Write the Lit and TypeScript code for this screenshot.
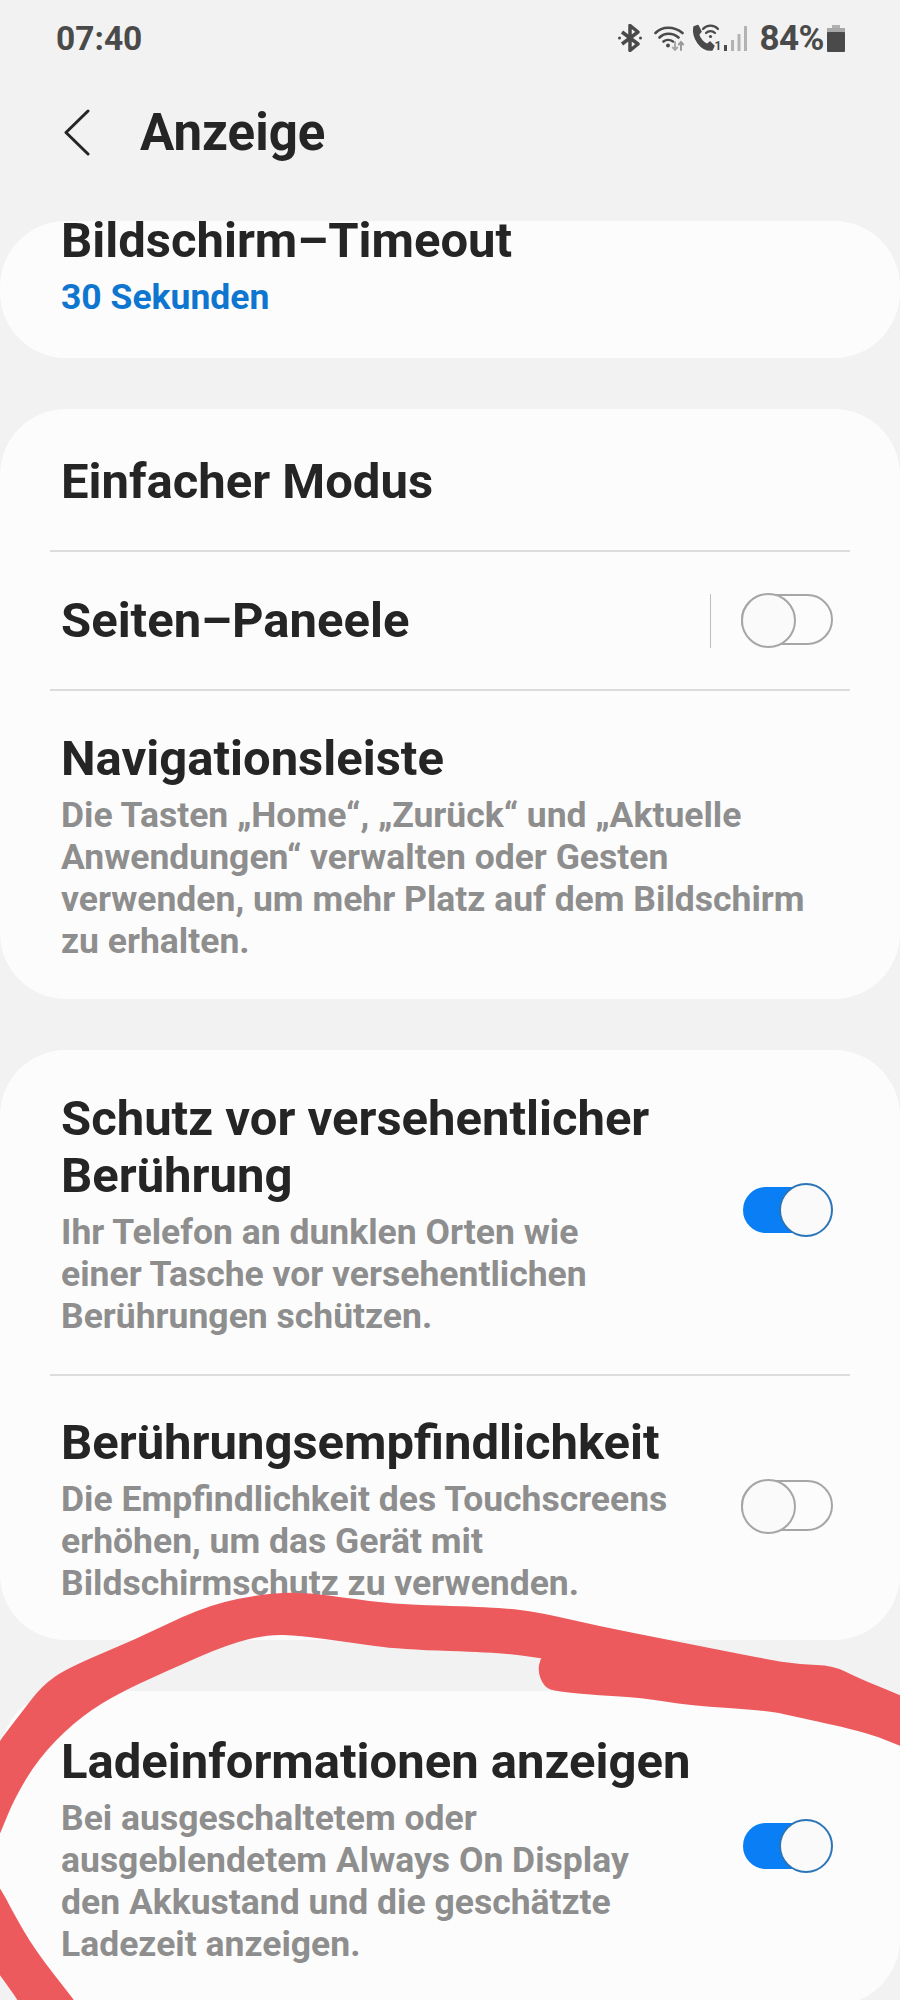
import { LitElement, html, css, svg } from "lit";
import { customElement } from "lit/decorators.js";

type Pt = [number, number];

const MAIN: Pt[] = [
  [-30, 1785], [0, 1743], [23, 1713], [43, 1687], [67, 1670], [133, 1642], [200, 1610], [250, 1597], [300, 1593],
  [357, 1601], [400, 1606], [500, 1609], [540, 1614], [600, 1628], [667, 1641], [767, 1661], [800, 1666],
  [833, 1667], [857, 1679], [900, 1697], [945, 1715], [945, 1762], [900, 1744], [867, 1731], [800, 1716], [767, 1709], [690, 1704],
  [640, 1696], [600, 1694], [557, 1690], [545, 1686], [539, 1670], [543, 1657], [543, 1657], [500, 1651], [400, 1648],
  [350, 1641], [300, 1634], [267, 1633], [227, 1643], [167, 1669], [110, 1696], [73, 1721], [37, 1758],
  [13, 1798], [0, 1830], [-30, 1900],
];
const LOWER: Pt[] = [[-30, 1845], [0, 1890], [10, 1910], [33, 1950], [72, 2000], [95, 2030], [35, 2030], [20, 2000], [0, 1973], [-30, 1930]];

/** Straight segments rounded off through their midpoints; the ends lie outside the canvas. */
const smooth = (pts: Pt[]) => {
  let d = `M${pts[0][0]} ${pts[0][1]}`;
  for (let i = 1; i < pts.length - 1; i++) {
    const mx = (pts[i][0] + pts[i + 1][0]) / 2;
    const my = (pts[i][1] + pts[i + 1][1]) / 2;
    d += ` Q${pts[i][0]} ${pts[i][1]} ${mx} ${my}`;
  }
  const last = pts[pts.length - 1];
  return `${d} L${last[0]} ${last[1]} Z`;
};

@customElement("app-root")
export class AppRoot extends LitElement {
  static styles = css`
    :host {
      display: block;
      position: relative;
      height: 2000px;
      overflow: hidden;
      background: #f2f2f2;
      font-family: Roboto, "Liberation Sans", sans-serif;
      color: #252525;
    }
    .status {
      height: 76px;
      display: flex;
      align-items: center;
      padding: 0 55px 0 56px;
      color: #4a4a4a;
      font-weight: 700;
    }
    .time { font-size: 33.500px; flex: 1; }
    .status svg { display: block; flex: none; }
    .pct { font-size: 35px; margin: 0 3px 0 12px; letter-spacing: -0.5px; }
    .bt { margin-right: 12px; }
    .wifi { margin-right: 7px; }
    .call { position: relative; margin-right: 3px; width: 30px; height: 28px; flex: none; }
    .one {
      position: absolute;
      right: 0;
      bottom: 0;
      font-size: 12px;
      line-height: 12px;
      font-weight: 700;
    }
    .header {
      height: 100px;
      display: flex;
      align-items: center;
      padding: 13px 0 0 62px;
      box-sizing: border-box;
      gap: 48px;
      font-size: 51px;
      font-weight: 700;
      margin-bottom: 45px;
    }
    .card {
      background: #fcfcfc;
      border-radius: 66px;
      margin-bottom: 51px;
    }
    .row {
      display: flex;
      align-items: center;
      padding: 0 67px 0 61px;
      gap: 20px;
    }
    .body { flex: 1; min-width: 0; }
    .title { font-size: 49px; line-height: 57px; font-weight: 700; }
    .sub { font-size: 35.500px; line-height: 42px; color: #8e8e8e; font-weight: 700; margin-top: 7px; }
    .first { height: 137px; align-items: flex-start; }
    .first .title { line-height: 40px; }
    .blue { color: #0f76d0; line-height: 56px; margin-top: 8px; }
    .divider { height: 2px; background: #dcdcdc; margin: 0 50px; }
    .short { height: 141px; padding-top: 3px; box-sizing: border-box; }
    .short2 { height: 137px; }
    .nav { padding-top: 39px; padding-bottom: 37px; }
    .sw { position: relative; width: 92px; height: 55px; flex: none; }
    .lift .sw { margin-bottom: 6px; }
    .track {
      position: absolute;
      left: 0;
      right: 0;
      top: 1px;
      bottom: 3px;
      border-radius: 26px;
      border: 2.500px solid #a6a6a6;
      box-sizing: border-box;
    }
    .knob {
      position: absolute;
      top: 0;
      left: 0;
      width: 55px;
      height: 55px;
      border-radius: 50%;
      background: #fafafa;
      border: 2.500px solid #a6a6a6;
      box-sizing: border-box;
    }
    .on .track {
      left: 2px;
      right: 4px;
      top: 4px;
      bottom: 5px;
      background: #0a7ff5;
      border-color: #0a7ff5;
    }
    .on .knob { left: auto; right: 0; width: 54px; height: 54px; border-color: #2a74b8; }
    .sep { width: 1.500px; height: 54px; background: #bdbdbd; margin-right: 10px; flex: none; }
    .p1 { padding-top: 40px; padding-bottom: 37px; }
    .p2 { padding-top: 38px; padding-bottom: 36px; }
    .p3 { padding-top: 42px; padding-bottom: 40px; }
    .ink { position: absolute; inset: 0; pointer-events: none; }
    .ink path { fill: #ec5a5d; stroke: #ec5a5d; stroke-width: 3px; stroke-linejoin: round; }
  `;

  private toggle(on: boolean) {
    return html`<div class="sw ${on ? "on" : ""}"><div class="track"></div><div class="knob"></div></div>`;
  }

  private statusIcons() {
    return html`
      <svg class="bt" width="24" height="28" viewBox="0 0 24 28" fill="none" stroke="#4a4a4a" stroke-width="3.500" stroke-linejoin="round">
        <path d="M4 8 20 20 12 26.500V1.500L20 8 4 20" />
        <circle cx="1.500" cy="14" r="1.500" fill="#4a4a4a" stroke="none" />
        <circle cx="22.500" cy="14" r="1.500" fill="#4a4a4a" stroke="none" />
      </svg>
      <svg class="wifi" width="30" height="26" viewBox="0 0 30 26" fill="none" stroke="#4a4a4a" stroke-width="2.600" stroke-linecap="round">
        <path d="M1.500 8C8 1 20 1 28.500 8M5.500 12.500C10.500 7.500 18.500 7.500 24.500 12.500M9.500 16.500C12 14.500 16 14.500 19 16.500" />
        <circle cx="14" cy="20.500" r="2" fill="#4a4a4a" stroke="none" />
        <path d="M21 17V25M18.800 22.500 21 25 23.200 22.500" stroke="#a8a8a8" stroke-width="2" />
        <path d="M27 25V17M24.800 19.500 27 17 29.200 19.500" stroke="#9a9a9a" stroke-width="2" />
      </svg>
      <div class="call">
        <svg width="30" height="28" viewBox="0 0 30 28" fill="none" stroke="#4a4a4a" stroke-linecap="round">
          <path d="M3 3 7 1.500 10 7.500 7.500 10.500C9 15 12 18.500 16 20.500L19 18 23 22 21 26C10 27 1 14 3 3Z" fill="#4a4a4a" stroke-width="1.500" stroke-linejoin="round" />
          <path d="M12 5C16 .5 23 .5 27 5M15 9C17.500 6.500 21.500 6.500 24 9" stroke-width="2.200" />
          <circle cx="19.500" cy="12.500" r="1.600" fill="#4a4a4a" stroke="none" />
        </svg>
        <span class="one">1</span>
      </div>
      <svg width="23" height="25" viewBox="0 0 23 25" fill="#b3b3b3">
        <rect x="0" y="19" width="3" height="6" fill="#4a4a4a" />
        <rect x="7" y="14" width="3" height="11" />
        <rect x="13.500" y="8" width="3" height="17" />
        <rect x="20" y="0" width="3" height="25" />
      </svg>
    `;
  }

  render() {
    return html`
      <div class="status">
        <div class="time">07:40</div>
        ${this.statusIcons()}
        <div class="pct">84%</div>
        <svg width="18" height="27" viewBox="0 0 18 27">
          <rect x="5" y="0" width="8" height="4" fill="#b0b0b0" />
          <rect x="0" y="3" width="18" height="5" fill="#a8a8a8" />
          <rect x="0" y="7" width="18" height="20" rx="1" fill="#4a4a4a" />
        </svg>
      </div>
      <div class="header">
        <svg width="30" height="48" viewBox="0 0 30 48" fill="none" stroke="#252525" stroke-width="3" stroke-linecap="round" stroke-linejoin="round">
          <path d="M26 2 4 23.500 26 45" />
        </svg>
        <span>Anzeige</span>
      </div>

      <div class="card">
        <div class="row first">
          <div class="body">
            <div class="title">Bildschirm–Timeout</div>
            <div class="sub blue">30 Sekunden</div>
          </div>
        </div>
      </div>

      <div class="card">
        <div class="row short"><div class="body title">Einfacher Modus</div></div>
        <div class="divider"></div>
        <div class="row short2">
          <div class="body title">Seiten–Paneele</div>
          <div class="sep"></div>
          ${this.toggle(false)}
        </div>
        <div class="divider"></div>
        <div class="row nav">
          <div class="body">
            <div class="title">Navigationsleiste</div>
            <div class="sub">Die Tasten „Home“, „Zurück“ und „Aktuelle<br />Anwendungen“ verwalten oder Gesten<br />verwenden, um mehr Platz auf dem Bildschirm<br />zu erhalten.</div>
          </div>
        </div>
      </div>

      <div class="card">
        <div class="row p1 lift">
          <div class="body">
            <div class="title">Schutz vor versehentlicher<br />Berührung</div>
            <div class="sub">Ihr Telefon an dunklen Orten wie<br />einer Tasche vor versehentlichen<br />Berührungen schützen.</div>
          </div>
          ${this.toggle(true)}
        </div>
        <div class="divider"></div>
        <div class="row p2 lift">
          <div class="body">
            <div class="title">Berührungsempfindlichkeit</div>
            <div class="sub">Die Empfindlichkeit des Touchscreens<br />erhöhen, um das Gerät mit<br />Bildschirmschutz zu verwenden.</div>
          </div>
          ${this.toggle(false)}
        </div>
      </div>

      <div class="card">
        <div class="row p3 lift">
          <div class="body">
            <div class="title">Ladeinformationen anzeigen</div>
            <div class="sub">Bei ausgeschaltetem oder<br />ausgeblendetem Always On Display<br />den Akkustand und die geschätzte<br />Ladezeit anzeigen.</div>
          </div>
          ${this.toggle(true)}
        </div>
      </div>

      <svg class="ink" width="900" height="2000" viewBox="0 0 900 2000">
        ${svg`<path d=${smooth(MAIN)} /><path d=${smooth(LOWER)} />`}
      </svg>
    `;
  }
}
